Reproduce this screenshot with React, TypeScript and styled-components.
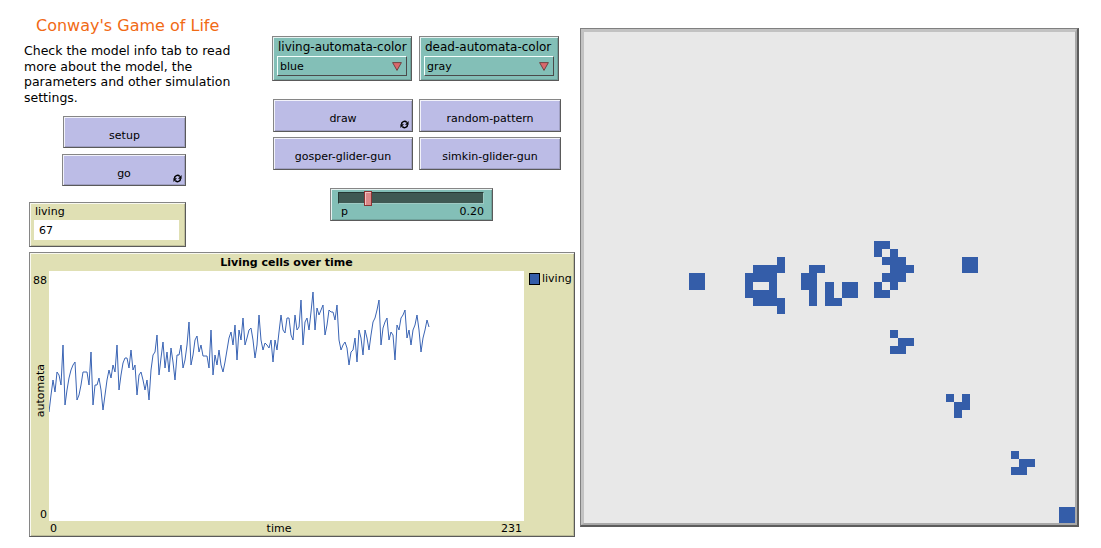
import React from "react";
import styled, { createGlobalStyle, css } from "styled-components";

const GlobalStyle = createGlobalStyle`
	* { box-sizing: border-box; }
	body {
		margin: 0;
		background: #ffffff;
		font-family: "DejaVu Sans", "Liberation Sans", sans-serif;
		color: #000;
	}
`;

const BUTTON_BG = "#bcbce6";
const CHOOSER_BG = "#83bfb7";
const MONITOR_BG = "#e0e0b4";
const CELL_BLUE = "#345da9";

// raised bevel that every widget frame shares
const raised = css`
	border: 1px solid #868686;
	border-right-color: #5a5a5a;
	border-bottom-color: #5a5a5a;
	box-shadow:
		inset 1px 1px 0 rgba(255, 255, 255, 0.8),
		inset -1px -1px 0 rgba(0, 0, 0, 0.15);
`;

// live cells in a 61 x 61 world, [col, row]
const CELLS: [number, number][] = [
	[13, 30], [14, 30], [13, 31], [14, 31],
	[24, 28],
	[21, 29], [22, 29], [23, 29], [24, 29],
	[20, 30], [21, 30], [22, 30], [23, 30],
	[20, 31], [23, 31],
	[20, 32], [21, 32], [22, 32], [23, 32],
	[21, 33], [22, 33], [23, 33], [24, 33],
	[24, 34],
	[28, 29], [29, 29],
	[27, 30], [28, 30], [27, 31], [28, 31],
	[28, 32], [28, 33],
	[30, 31], [30, 32], [30, 33], [31, 33],
	[32, 31], [33, 31], [32, 32], [33, 32],
	[36, 26], [37, 26],
	[36, 27], [38, 27],
	[37, 28], [38, 28], [39, 28],
	[38, 29], [39, 29], [40, 29],
	[37, 30], [38, 30], [39, 30],
	[36, 31], [38, 31],
	[36, 32], [37, 32],
	[47, 28], [48, 28], [47, 29], [48, 29],
	[38, 37], [39, 38], [40, 38], [38, 39], [39, 39],
	[45, 45], [47, 45], [46, 46], [47, 46], [46, 47],
	[53, 52], [54, 53], [55, 53], [53, 54], [54, 54],
	[59, 59], [60, 59], [59, 60], [60, 60],
];

// plotted pen, pixel rows inside the 475 x 250 plot area, one sample every 2px
const PEN = [
	141, 124, 109, 121, 101, 104, 114, 74, 134, 119, 107, 99, 94, 91, 129, 124,
	114, 101, 101, 101, 114, 81, 134, 114, 114, 107, 119, 139, 124, 109, 99, 107,
	94, 101, 74, 119, 104, 92, 87, 87, 97, 79, 99, 94, 124, 104, 101, 109,
	119, 109, 129, 99, 84, 81, 64, 104, 87, 71, 97, 81, 101, 77, 91, 109,
	84, 84, 74, 97, 89, 74, 51, 94, 84, 69, 65, 81, 74, 85, 85, 85,
	97, 59, 104, 84, 94, 79, 94, 101, 91, 79, 67, 61, 74, 54, 89, 59,
	69, 47, 74, 67, 59, 57, 69, 87, 74, 44, 69, 79, 72, 74, 77, 69,
	91, 69, 79, 61, 44, 59, 62, 47, 47, 64, 69, 44, 59, 56, 29, 74,
	51, 47, 59, 41, 21, 59, 37, 44, 39, 34, 64, 54, 39, 41, 41, 49,
	34, 69, 79, 74, 71, 77, 94, 81, 79, 67, 91, 59, 67, 84, 59, 67,
	79, 64, 51, 47, 39, 29, 74, 57, 51, 47, 69, 61, 64, 89, 54, 59,
	47, 44, 39, 67, 59, 74, 59, 54, 44, 59, 81, 67, 59, 49, 56,
];

const ForeverIcon = () => (
	<IconSpot>
		<svg width="9" height="9" viewBox="0 0 12 12">
			<path d="M2 6 A4 4 0 0 1 9 3.2" stroke="#000" strokeWidth="2" fill="none" />
			<polygon points="11.4,1.2 11.4,6.2 6.6,6.2" fill="#000" />
			<path d="M10 6 A4 4 0 0 1 3 8.8" stroke="#000" strokeWidth="2" fill="none" />
			<polygon points="0.6,10.8 0.6,5.8 5.4,5.8" fill="#000" />
		</svg>
	</IconSpot>
);

const DropArrow = () => (
	<svg width="10" height="9" viewBox="0 0 10 9">
		<polygon points="0.6,0.6 9.4,0.6 5,8.4" fill="#d9686c" stroke="#6a3a3a" strokeWidth="0.9" />
	</svg>
);

const ChooserWidget = (props: { label: string; value: string }) => (
	<Chooser>
		<ChooserLabel>{props.label}</ChooserLabel>
		<SelectBox>
			<span>{props.value}</span>
			<DropArrow />
		</SelectBox>
	</Chooser>
);

const App = () => {
	const points = PEN.map((y, i) => `${i * 2},${y}`).join(" ");
	return (
		<>
			<GlobalStyle />
			<Page>
				<LeftPane>
					<TopArea>
						<InfoColumn>
							<Title>Conway's Game of Life</Title>
							<Note>
								Check the model info tab to read
								<br />
								more about the model, the
								<br />
								parameters and other simulation
								<br />
								settings.
							</Note>
							<WideButton $w={123} $ml={63} $mt={11}>
								setup
							</WideButton>
							<WideButton $w={124} $ml={62} $mt={6}>
								go
								<ForeverIcon />
							</WideButton>
							<Monitor>
								<MonitorLabel>living</MonitorLabel>
								<MonitorValue>67</MonitorValue>
							</Monitor>
						</InfoColumn>
						<ControlColumn>
							<ChooserRow>
								<ChooserWidget label="living-automata-color" value="blue" />
								<ChooserWidget label="dead-automata-color" value="gray" />
							</ChooserRow>
							<ButtonGrid>
								<Button>
									draw
									<ForeverIcon />
								</Button>
								<Button>random-pattern</Button>
								<Button>gosper-glider-gun</Button>
								<Button>simkin-glider-gun</Button>
							</ButtonGrid>
							<Slider>
								<Track>
									<Thumb style={{ left: `calc(${0.2 * 100}% - 4px)` }} />
								</Track>
								<SliderLabels>
									<span>p</span>
									<span>0.20</span>
								</SliderLabels>
							</Slider>
						</ControlColumn>
					</TopArea>
					<Plot>
						<PlotTitle>Living cells over time</PlotTitle>
						<YAxis>
							<span>88</span>
							<YLabel>automata</YLabel>
							<span>0</span>
						</YAxis>
						<PlotArea>
							<svg width="475" height="250" viewBox="0 0 475 250">
								<polyline points={points} fill="none" stroke="#3a64b4" strokeWidth="1" />
							</svg>
						</PlotArea>
						<Legend>
							<LegendSwatch />
							<span>living</span>
						</Legend>
						<XAxis>
							<span>0</span>
							<span>time</span>
							<span>231</span>
						</XAxis>
					</Plot>
				</LeftPane>
				<ViewFrame>
					<ViewInner>
						<svg width="491" height="491" viewBox="0 0 61 61" shapeRendering="crispEdges">
							{CELLS.map(([c, r]) => (
								<rect key={`${c}-${r}`} x={c} y={r} width="1" height="1" fill={CELL_BLUE} />
							))}
						</svg>
					</ViewInner>
				</ViewFrame>
			</Page>
		</>
	);
};

export default App;

const Page = styled.div`
	display: flex;
	align-items: flex-start;
	width: 1101px;
	height: 548px;
	overflow: hidden;
`;

const LeftPane = styled.div`
	display: flex;
	flex-direction: column;
	width: 575px;
`;

const TopArea = styled.div`
	display: flex;
	height: 247px;
`;

const InfoColumn = styled.div`
	display: flex;
	flex-direction: column;
	align-items: flex-start;
	width: 272px;
`;

const Title = styled.div`
	margin: 16px 0 0 36px;
	font-size: 16px;
	line-height: 20px;
	color: #f16a15;
`;

const Note = styled.div`
	margin: 7px 0 0 24px;
	font-size: 12.5px;
	line-height: 15.6px;
`;

const Button = styled.div`
	position: relative;
	display: flex;
	align-items: center;
	justify-content: center;
	height: 33px;
	padding-top: 5px;
	background: ${BUTTON_BG};
	font-size: 11px;
	${raised}
`;

const WideButton = styled(Button)<{ $w: number; $ml: number; $mt: number }>`
	width: ${(p) => p.$w}px;
	height: 32px;
	margin-left: ${(p) => p.$ml}px;
	margin-top: ${(p) => p.$mt}px;
	padding-top: 6px;
`;

const IconSpot = styled.span`
	position: absolute;
	right: 3px;
	bottom: 2px;
	display: flex;
`;

const Monitor = styled.div`
	display: flex;
	flex-direction: column;
	width: 157px;
	height: 45px;
	margin: 16px 0 0 29px;
	padding: 2px 6px 0 4px;
	background: ${MONITOR_BG};
	font-size: 11px;
	${raised}
`;

const MonitorLabel = styled.div`
	line-height: 13px;
	padding-left: 1px;
`;

const MonitorValue = styled.div`
	display: flex;
	align-items: center;
	height: 20px;
	margin-top: 2px;
	padding-left: 5px;
	background: #ffffff;
`;

const ControlColumn = styled.div`
	display: flex;
	flex-direction: column;
	align-items: flex-start;
	padding-top: 36px;
`;

const ChooserRow = styled.div`
	display: flex;
	gap: 7px;
`;

const Chooser = styled.div`
	display: flex;
	flex-direction: column;
	width: 140px;
	height: 45px;
	padding: 3px 4px 4px 4px;
	background: ${CHOOSER_BG};
	${raised}
`;

const ChooserLabel = styled.div`
	font-size: 12px;
	line-height: 14px;
	padding-left: 1px;
`;

const SelectBox = styled.div`
	display: flex;
	align-items: center;
	justify-content: space-between;
	height: 20px;
	margin-top: auto;
	padding: 0 4px 0 2px;
	font-size: 11px;
	border: 1px solid;
	border-color: #f4fffc #4a4a4a #4a4a4a #f4fffc;
`;

const ButtonGrid = styled.div`
	display: grid;
	grid-template-columns: 140px 142px;
	grid-auto-rows: 33px;
	column-gap: 6px;
	row-gap: 5px;
	margin: 18px 0 0 1px;
`;

const Slider = styled.div`
	width: 163px;
	height: 33px;
	margin: 18px 0 0 58px;
	padding: 3px 8px 0 7px;
	background: ${CHOOSER_BG};
	font-size: 11px;
	${raised}
`;

const Track = styled.div`
	position: relative;
	height: 12px;
	background: #3f5953;
	border: 1px solid;
	border-color: #263834 #9fcbc4 #9fcbc4 #263834;
`;

const Thumb = styled.div`
	position: absolute;
	top: -2px;
	width: 8px;
	height: 15px;
	background: #dc8888;
	border: 1px solid #8a3434;
	box-shadow: inset 1px 1px 0 #f3c0c0;
`;

const SliderLabels = styled.div`
	display: flex;
	justify-content: space-between;
	margin-top: 1px;
	padding-left: 3px;
	line-height: 13px;
`;

const Plot = styled.div`
	display: grid;
	grid-template-columns: 19px 475px 1fr;
	grid-template-rows: 18px 250px 1fr;
	width: 546px;
	height: 285px;
	margin: 5px 0 0 29px;
	background: ${MONITOR_BG};
	font-size: 11px;
	${raised}
`;

const PlotTitle = styled.div`
	grid-column: 2;
	padding-top: 1px;
	text-align: center;
	font-weight: bold;
	line-height: 17px;
`;

const YAxis = styled.div`
	grid-column: 1;
	grid-row: 2;
	display: flex;
	flex-direction: column;
	justify-content: space-between;
	align-items: flex-end;
	padding: 3px 2px 0 0;
	line-height: 13px;
`;

const YLabel = styled.span`
	writing-mode: vertical-rl;
	transform: rotate(180deg);
	margin-bottom: 14px;
`;

const PlotArea = styled.div`
	grid-column: 2;
	grid-row: 2;
	background: #ffffff;
	display: flex;
`;

const Legend = styled.div`
	grid-column: 3;
	grid-row: 1 / 3;
	display: flex;
	align-items: flex-start;
	gap: 2px;
	padding: 19px 0 0 5px;
	line-height: 13px;
`;

const LegendSwatch = styled.span`
	width: 11px;
	height: 12px;
	margin-top: 1px;
	background: ${CELL_BLUE};
	border: 1px solid #000;
`;

const XAxis = styled.div`
	grid-column: 2;
	grid-row: 3;
	display: flex;
	justify-content: space-between;
	padding: 1px 2px 0 1px;
	line-height: 13px;
`;

const ViewFrame = styled.div`
	margin: 28px 0 0 5px;
	border-style: solid;
	border-width: 1px 2px 2px 1px;
	border-color: #808080 #5c5c5c #5c5c5c #808080;
`;

const ViewInner = styled.div`
	display: flex;
	background: #e8e8e8;
	border-style: solid;
	border-width: 3px 2px 2px 3px;
	border-color: #c2c2c2 #a9a9a9 #a9a9a9 #c2c2c2;
`;
